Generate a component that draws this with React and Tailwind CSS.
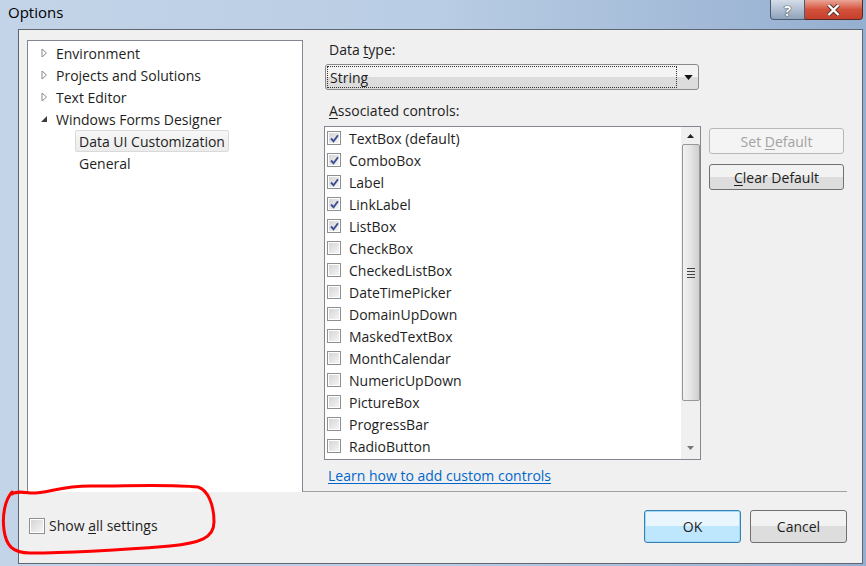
import React from "react";

const items = [
  { label: "TextBox (default)", checked: true },
  { label: "ComboBox", checked: true },
  { label: "Label", checked: true },
  { label: "LinkLabel", checked: true },
  { label: "ListBox", checked: true },
  { label: "CheckBox", checked: false },
  { label: "CheckedListBox", checked: false },
  { label: "DateTimePicker", checked: false },
  { label: "DomainUpDown", checked: false },
  { label: "MaskedTextBox", checked: false },
  { label: "MonthCalendar", checked: false },
  { label: "NumericUpDown", checked: false },
  { label: "PictureBox", checked: false },
  { label: "ProgressBar", checked: false },
  { label: "RadioButton", checked: false },
];

const tree = [
  { label: "Environment", arrow: "closed" },
  { label: "Projects and Solutions", arrow: "closed" },
  { label: "Text Editor", arrow: "closed" },
  { label: "Windows Forms Designer", arrow: "open" },
  { label: "Data UI Customization", child: true, selected: true },
  { label: "General", child: true },
];

const CheckBox = ({ checked }) => (
  <span className="relative flex h-[14px] w-[14px] shrink-0 items-center justify-center border border-[#8e8f8f] bg-white">
    <span className="absolute inset-[1px] bg-gradient-to-br from-[#d6d6d6] to-[#f4f4f4]" />
    {checked && (
      <svg viewBox="0 0 11 11" className="relative h-[11px] w-[11px]">
        <path d="M2 5.5 L4.5 8.2 L9 2.2" fill="none" stroke="#3d4f94" strokeWidth="1.9" />
      </svg>
    )}
  </span>
);

// tree expand arrows
const Arrow = ({ type }) =>
  type === "open" ? (
    <svg viewBox="0 0 8 8" className="h-[8px] w-[8px]">
      <path d="M7 1 L7 7 L1 7 Z" fill="#3c3c3c" />
    </svg>
  ) : (
    <svg viewBox="0 0 7 10" className="h-[10px] w-[7px]">
      <path d="M1 1 L5.5 5 L1 9 Z" fill="white" stroke="#8a8a8a" strokeWidth="1" />
    </svg>
  );

const App = () => {
  return (
    <div className="relative h-[566px] w-[866px] overflow-hidden bg-gradient-to-r from-[#c3d4e8] via-[#b9cde4] to-[#95afd0] font-['Segoe_UI','Open_Sans',sans-serif] text-[14px] text-[#1e1e1e]">
      {/* Title bar */}
      <div className="relative flex h-[29px] items-center pb-[4px] pl-[8px] text-[15px] text-black">
        Options
        <div className="absolute right-[3px] top-0 flex">
          <div className="flex h-[20px] w-[35px] items-center justify-center rounded-bl-[4px] border border-t-0 border-[#4a5a72] bg-gradient-to-b from-[#d4dde8] via-[#b1c0d2] to-[#8ea2b9]">
            <span className="text-[15px] font-bold leading-[18px] text-white [text-shadow:0_0_1px_#222,0_0_1px_#222]">?</span>
          </div>
          <div className="flex h-[20px] w-[58px] items-center justify-center rounded-br-[4px] border border-l-0 border-t-0 border-[#5a2a22] bg-gradient-to-b from-[#e8a597] via-[#d3503b] to-[#c4402d]">
            <svg viewBox="0 0 14 12" className="h-[12px] w-[15px]">
              <path d="M2 1 L12 11 M12 1 L2 11" stroke="#4a3030" strokeWidth="4" />
              <path d="M2 1 L12 11 M12 1 L2 11" stroke="white" strokeWidth="2.4" />
            </svg>
          </div>
        </div>
      </div>

      {/* Client area */}
      <div className="ml-[18px] flex h-[535px] w-[845px] flex-col border border-[#5f6670] bg-[#f0f0f0] pl-[8px] pr-[15px] pt-[10px]">
        <div className="flex h-[452px] border-b border-[#a0a0a0]">
          {/* Tree */}
          <div className="h-[452px] w-[276px] border border-b-0 border-[#828790] bg-white pt-[1px]">
            {tree.map((t) => (
              <div key={t.label} className="flex h-[22px] items-center">
                {t.child ? (
                  <div
                    className={`ml-[47px] flex h-[22px] items-center rounded-[2px] px-[3px] ${
                      t.selected ? "border border-[#d9d9d9] bg-gradient-to-b from-[#f7f7f7] to-[#ececec]" : "border border-transparent"
                    }`}
                  >
                    {t.label}
                  </div>
                ) : (
                  <>
                    <div className="flex w-[28px] justify-end pr-[8px]">
                      <Arrow type={t.arrow} />
                    </div>
                    <span>{t.label}</span>
                  </>
                )}
              </div>
            ))}
          </div>

          {/* Right panel */}
          <div className="flex flex-col pl-[22px]">
            <div className="h-[20px] pl-[4px] leading-[20px]">
              Data <span className="underline underline-offset-2">t</span>ype:
            </div>
            <div className="mt-[4px] flex h-[26px] w-[374px] items-center rounded-[3px] border border-[#8a8a8a] bg-gradient-to-b from-[#f3f3f3] from-50% to-[#dcdcdc] to-50% p-[1px]">
              <div className="flex h-full w-[350px] items-center border border-dotted border-[#333] pl-[2px]">String</div>
              <svg viewBox="0 0 10 6" className="ml-[7px] h-[5px] w-[9px]">
                <path d="M0 0 L10 0 L5 6 Z" fill="#111" />
              </svg>
            </div>
            <div className="mt-[11px] h-[20px] pl-[4px] leading-[20px]">
              <span className="underline underline-offset-2">A</span>ssociated controls:
            </div>

            <div className="mt-[5px] flex">
              {/* Listbox */}
              <div className="-ml-[1px] flex h-[334px] w-[377px] border border-[#828790] bg-white">
                <div className="flex-1">
                  {items.map((it) => (
                    <div key={it.label} className="flex h-[22px] items-center gap-[8px] pl-[2px]">
                      <CheckBox checked={it.checked} />
                      <span>{it.label}</span>
                    </div>
                  ))}
                </div>
                {/* Scrollbar */}
                <div className="flex w-[19px] flex-col items-center bg-[#f0f0f0]">
                  <div className="flex h-[17px] items-center">
                    <svg viewBox="0 0 7 4" className="h-[4px] w-[7px]">
                      <path d="M0 4 L7 4 L3.5 0 Z" fill="#222" />
                    </svg>
                  </div>
                  <div className="flex h-[257px] w-[18px] items-center justify-center rounded-[2px] border border-[#979797] bg-gradient-to-r from-[#f2f2f2] via-[#e4e4e4] to-[#cfcfcf]">
                    <div className="flex flex-col gap-[2px]">
                      <div className="h-px w-[8px] bg-[#444]" />
                      <div className="h-px w-[8px] bg-[#444]" />
                      <div className="h-px w-[8px] bg-[#444]" />
                      <div className="h-px w-[8px] bg-[#444]" />
                    </div>
                  </div>
                  <div className="flex-1" />
                  <div className="flex h-[22px] items-center">
                    <svg viewBox="0 0 7 4" className="h-[4px] w-[7px]">
                      <path d="M0 0 L7 0 L3.5 4 Z" fill="#777" />
                    </svg>
                  </div>
                </div>
              </div>

              {/* Side buttons */}
              <div className="ml-[8px] flex flex-col gap-[10px] pt-[2px]">
                <div className="flex h-[26px] w-[135px] items-center justify-center rounded-[3px] border border-[#b5b8ba] bg-[#f4f4f4] text-[#a2a2a2]">
                  Set&nbsp;<span className="underline underline-offset-2">D</span>efault
                </div>
                <div className="flex h-[26px] w-[135px] items-center justify-center rounded-[3px] border border-[#707070] bg-gradient-to-b from-[#f2f2f2] from-50% to-[#dddddd] to-50%">
                  <span className="underline underline-offset-2">C</span>lear Default
                </div>
              </div>
            </div>

            <div className="mt-[6px] h-[20px] pl-[3px] leading-[20px] text-[#0066cc] underline underline-offset-2">
              Learn how to add custom controls
            </div>
          </div>
        </div>

        {/* Bottom bar */}
        <div className="flex flex-1 items-center justify-between pb-[2px] pl-[2px]">
          <div className="mb-[2px] flex items-center gap-[4px]">
            <span className="relative flex h-[16px] w-[16px] border border-[#8e8f8f] bg-white">
              <span className="absolute inset-[1px] bg-gradient-to-br from-[#d6d6d6] to-[#f4f4f4]" />
            </span>
            <span>
              Show <span className="underline underline-offset-2">a</span>ll settings
            </span>
          </div>
          <div className="flex gap-[9px]">
            <div className="flex h-[33px] w-[97px] items-center justify-center rounded-[3px] border border-[#3c7fb1] bg-gradient-to-b from-[#eaf6fd] from-50% to-[#bee6fd] to-50% shadow-[inset_0_0_0_1px_#9edbf9]">
              OK
            </div>
            <div className="flex h-[33px] w-[97px] items-center justify-center rounded-[3px] border border-[#707070] bg-gradient-to-b from-[#f2f2f2] from-50% to-[#dddddd] to-50%">
              Cancel
            </div>
          </div>
        </div>
      </div>

      {/* Red hand-drawn annotation */}
      <svg className="pointer-events-none absolute left-0 top-[480px] h-[86px] w-[230px]" viewBox="0 480 230 86">
        <path
          d="M12 492 C 5 500, 2 515, 4 530 C 6 545, 12 553, 30 553 C 70 553, 120 550, 170 546 C 200 543, 214 538, 214 522 C 214 505, 208 490, 198 487 C 170 484, 130 486, 90 486 C 60 486, 45 494, 30 493 C 22 492, 16 491, 12 494"
          fill="none"
          stroke="#ff0000"
          strokeWidth="3"
          strokeLinecap="round"
        />
      </svg>
    </div>
  );
};

export default App;
